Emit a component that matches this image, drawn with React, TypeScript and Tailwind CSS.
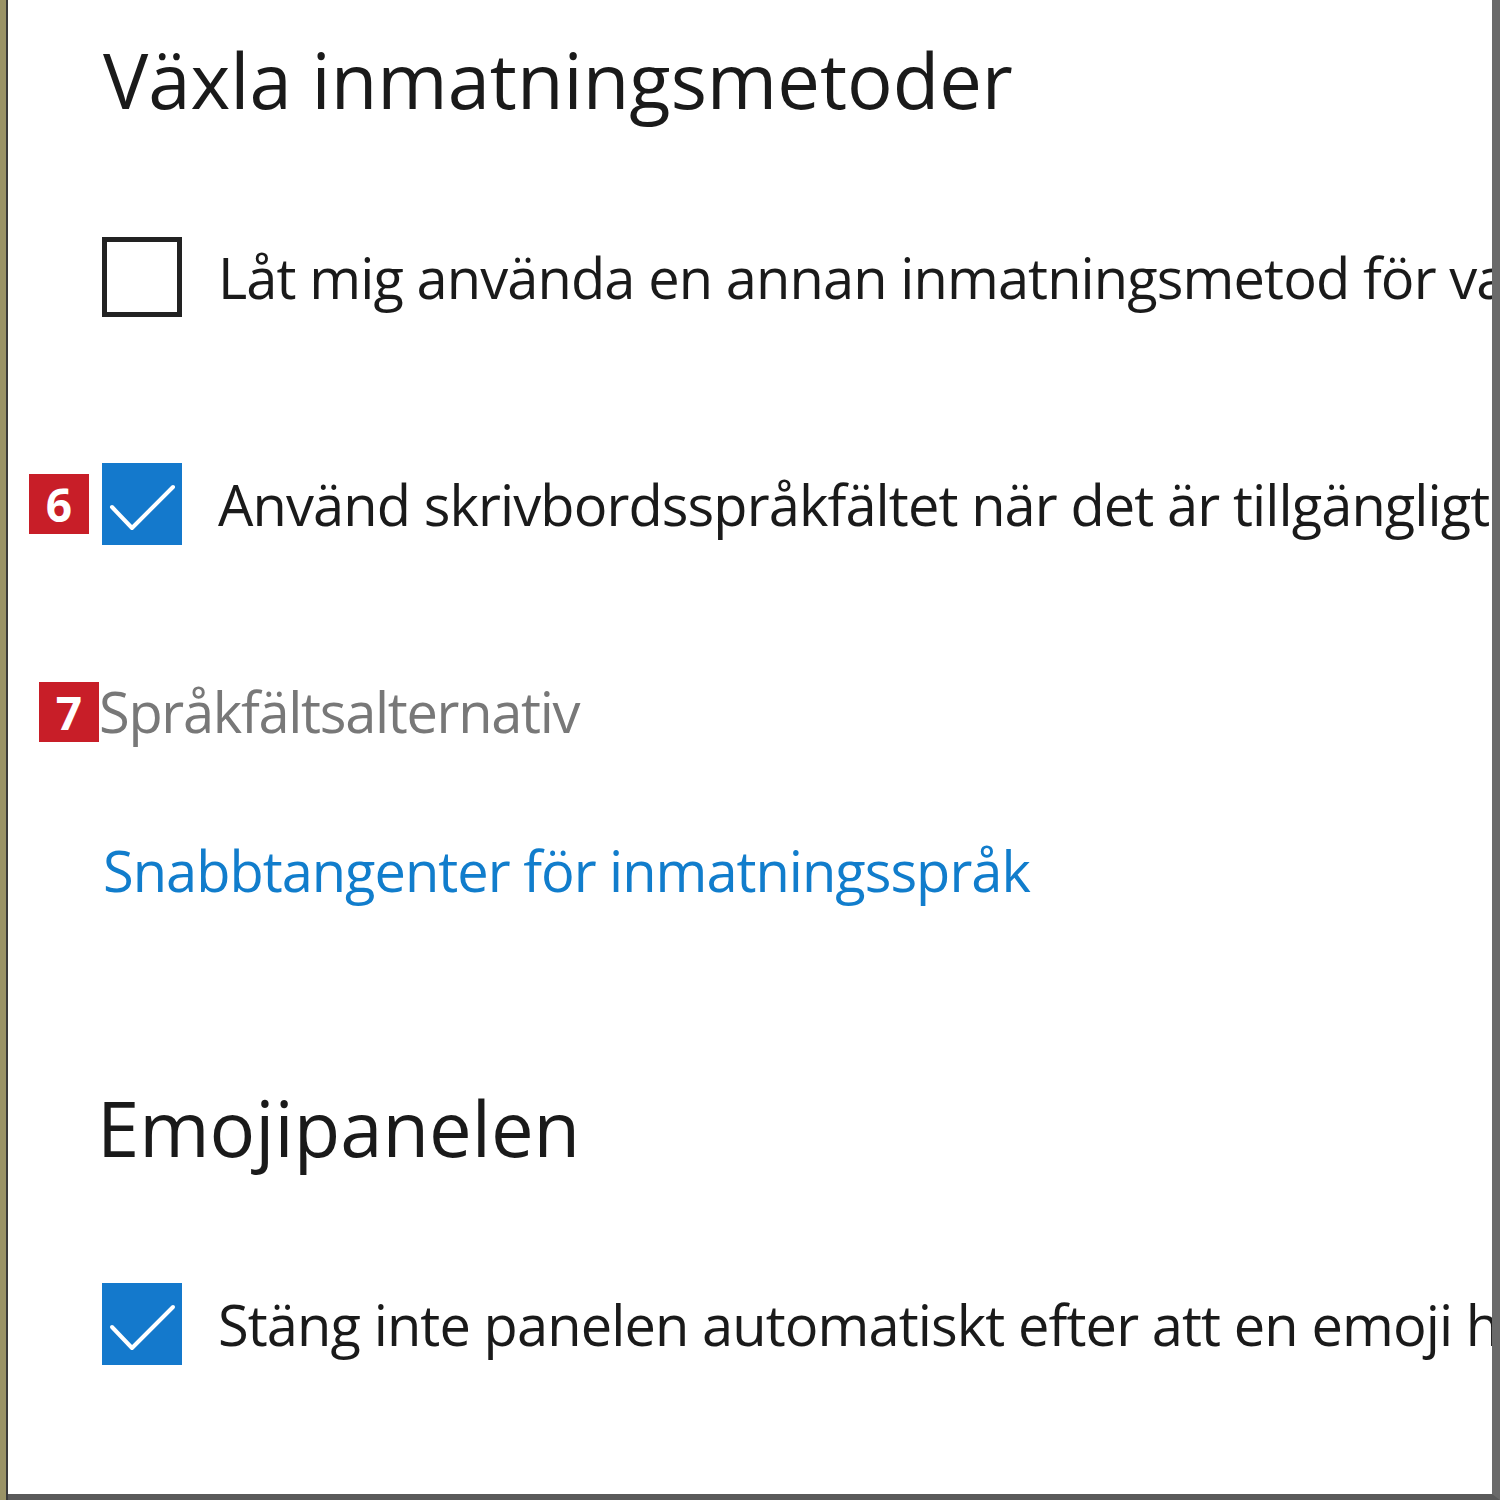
import React from "react";

const font = { fontFamily: '"Open Sans", "Noto Sans", "DejaVu Sans", sans-serif' };

function Check() {
  return (
    <svg width="80" height="82" viewBox="0 0 80 82" className="block shrink-0">
      <rect x="0" y="0" width="80" height="82" fill="#1479cc" />
      <path d="M10 44 L30 65 L71 24" fill="none" stroke="#ffffff" strokeWidth="4" strokeLinecap="round" strokeLinejoin="round" />
    </svg>
  );
}

function Badge({ n }: { n: string }) {
  return (
    <div className="w-[60px] h-[60px] shrink-0 bg-[#c81e28] text-white flex items-center justify-center font-bold text-[46px] leading-none">
      {n}
    </div>
  );
}

export default function App() {
  return (
    <div style={font} className="w-[1500px] h-[1500px] bg-[#9c9468] overflow-hidden flex">
      <div className="w-[6px] shrink-0 bg-[#9a9366]" />
      <div className="w-[2px] shrink-0 bg-[#3a3a3a]" />
      <div className="flex-1 min-w-0 flex flex-col bg-white border-r-[8px] border-r-[#6a6a6a] border-b-[6px] border-b-[#5a5a5a] overflow-hidden whitespace-nowrap text-[#1a1a1a]">
        <div className="pl-[95px] pt-[30px] text-[76px] leading-[100px] shrink-0">Växla inmatningsmetoder</div>

        <div className="flex items-center mt-[107px] h-[80px] shrink-0">
          <div className="w-[94px] shrink-0" />
          <div className="w-[80px] h-[80px] border-[5px] border-[#222] shrink-0" />
          <div className="ml-[36px] shrink-0 text-[56px] leading-[80px] tracking-[-0.9px]">Låt mig använda en annan inmatningsmetod för varje app-fönster</div>
        </div>

        <div className="flex items-center mt-[146px] h-[82px] shrink-0">
          <div className="w-[21px] shrink-0" />
          <Badge n="6" />
          <div className="w-[13px] shrink-0" />
          <Check />
          <div className="ml-[36px] shrink-0 text-[56px] leading-[80px] tracking-[-0.9px]">Använd skrivbordsspråkfältet när det är tillgängligt</div>
        </div>

        <div className="flex items-center mt-[136px] h-[61px] shrink-0">
          <div className="w-[31px] shrink-0" />
          <Badge n="7" />
          <div className="shrink-0 text-[56px] leading-[61px] tracking-[-1.3px] text-[#787878]">Språkfältsalternativ</div>
        </div>

        <div className="pl-[95px] mt-[88px] shrink-0 text-[56px] leading-[80px] tracking-[-1px] text-[#117dcc]">Snabbtangenter för inmatningsspråk</div>

        <div className="pl-[89px] mt-[168px] shrink-0 text-[76px] leading-[100px]">Emojipanelen</div>

        <div className="flex items-center mt-[105px] h-[82px] shrink-0">
          <div className="w-[94px] shrink-0" />
          <Check />
          <div className="ml-[36px] shrink-0 text-[56px] leading-[80px] tracking-[-0.9px]">Stäng inte panelen automatiskt efter att en emoji har valts</div>
        </div>
      </div>
    </div>
  );
}
